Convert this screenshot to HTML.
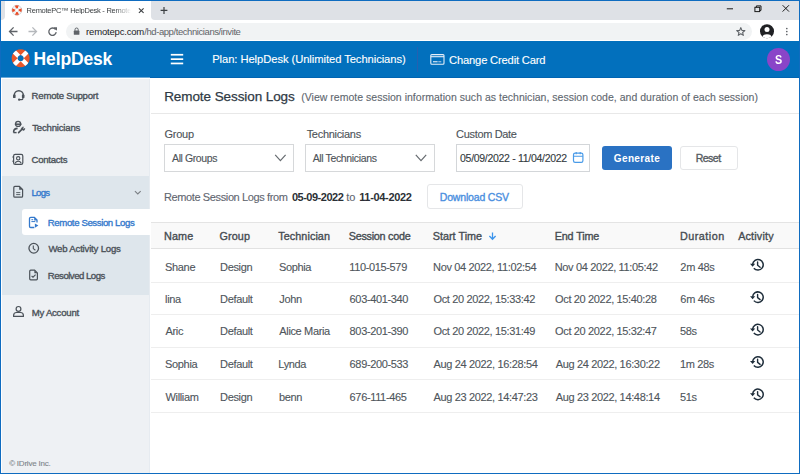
<!DOCTYPE html>
<html><head><meta charset="utf-8">
<style>
*{box-sizing:border-box;margin:0;padding:0}
html,body{width:800px;height:474px;overflow:hidden;background:#fff}
body{position:relative;font-family:"Liberation Sans",sans-serif}
.a{position:absolute}
.t{position:absolute;white-space:nowrap;line-height:1}
svg{position:absolute;overflow:visible}
</style></head><body>
<!-- browser chrome -->
<div class="a" style="left:0;top:0;width:800px;height:41px;background:#fff"></div>
<div class="a" style="left:0;top:0;width:5px;height:20px;background:#dee1e6;border-bottom-right-radius:4px"></div>
<div class="a" style="left:151px;top:0;width:649px;height:20px;background:#dee1e6;border-bottom-left-radius:4px"></div>
<div class="a" style="left:4px;top:0;width:148px;height:1px;background:#dee1e6"></div>
<div class="a" style="left:65.5px;top:22.5px;width:686px;height:17px;background:#f1f3f4;border-radius:9px"></div>

<!-- app header -->
<div class="a" style="left:0;top:41px;width:800px;height:37px;background:#0270bd"></div>
<div class="a" style="left:150px;top:77px;width:650px;height:1px;background:#0064b2"></div>
<div class="a" style="left:417px;top:47px;width:1px;height:25px;background:#2560b0"></div>
<div class="a" style="left:767px;top:48px;width:23px;height:23px;border-radius:50%;background:#8a45c8"></div>

<!-- sidebar -->
<div class="a" style="left:0;top:77px;width:150px;height:1px;background:#6aa9d9"></div><div class="a" style="left:0;top:78px;width:150px;height:1px;background:#fff"></div><div class="a" style="left:1px;top:78px;width:1px;height:396px;background:#fff"></div>
<div class="a" style="left:2px;top:79px;width:148px;height:395px;background:#eef1f4;border-right:1px solid #e6ebf0"></div>
<div class="a" style="left:2px;top:176px;width:147px;height:119px;background:#dee6ec"></div>
<div class="a" style="left:22px;top:209px;width:128px;height:26px;background:#fff;border-radius:3px 0 0 3px"></div>

<!-- content -->
<div class="a" style="left:151px;top:113px;width:649px;height:1px;background:#e8e8e8"></div>
<div class="a" style="left:164px;top:144px;width:130px;height:28px;border:1px solid #d6d8da"></div>
<div class="a" style="left:305px;top:144px;width:130px;height:28px;border:1px solid #d6d8da"></div>
<div class="a" style="left:456px;top:144px;width:134px;height:28px;border:1px solid #d3d6d9"></div>
<div class="a" style="left:602px;top:146px;width:70px;height:24px;background:#2a72c3;border-radius:3px"></div>
<div class="a" style="left:680px;top:146px;width:58px;height:24px;border:1px solid #e5e6e8;border-radius:3px"></div>
<div class="a" style="left:427px;top:184px;width:96px;height:25px;border:1px solid #e5e6e8;border-radius:3px"></div>

<!-- table -->
<div class="a" style="left:151px;top:222px;width:649px;height:27px;background:#f9f9f9;border-top:1px solid #e4e4e4;border-bottom:1px solid #e2e2e2"></div>
<div class="a" style="left:151px;top:282px;width:649px;height:1px;background:#eeeeee"></div>
<div class="a" style="left:151px;top:314px;width:649px;height:1px;background:#eeeeee"></div>
<div class="a" style="left:151px;top:347px;width:649px;height:1px;background:#eeeeee"></div>
<div class="a" style="left:151px;top:379px;width:649px;height:1px;background:#eeeeee"></div>
<div class="a" style="left:151px;top:412px;width:649px;height:1px;background:#eeeeee"></div>

<span id="tab" class="t" style="left:26.60px;top:6.69px;font-size:7.5px;font-weight:400;color:#3c4043;letter-spacing:-0.269px;-webkit-mask-image:linear-gradient(90deg,#000 0,#000 88px,transparent 104px);">RemotePC™ HelpDesk - Remote</span>
<span id="url1" class="t" style="left:86.10px;top:27.36px;font-size:9.5px;font-weight:400;color:#202124;letter-spacing:-0.182px;">remotepc.com</span>
<span id="url2" class="t" style="left:144.20px;top:27.36px;font-size:9.5px;font-weight:400;color:#5f6368;letter-spacing:-0.420px;">/hd-app/technicians/invite</span>
<span id="logo" class="t" style="left:33.60px;top:50.71px;font-size:17.5px;font-weight:700;color:#ffffff;letter-spacing:-0.143px;">HelpDesk</span>
<span id="plan" class="t" style="left:212.16px;top:54.44px;font-size:11.2px;font-weight:400;color:#ffffff;letter-spacing:-0.057px;-webkit-text-stroke:0.12px currentColor;">Plan: HelpDesk (Unlimited Technicians)</span>
<span id="ccc" class="t" style="left:449.08px;top:54.92px;font-size:11.2px;font-weight:400;color:#ffffff;letter-spacing:-0.179px;-webkit-text-stroke:0.12px currentColor;">Change Credit Card</span>
<span id="avS" class="t" style="left:774.54px;top:54.14px;font-size:12px;font-weight:700;color:#ffffff;letter-spacing:-0.350px;transform:scaleX(0.9);transform-origin:0 0;">S</span>
<span id="sb1" class="t" style="left:31.60px;top:90.59px;font-size:9.6px;font-weight:400;color:#4b5259;letter-spacing:-0.230px;-webkit-text-stroke:0.35px currentColor;">Remote Support</span>
<span id="sb2" class="t" style="left:32.20px;top:123.11px;font-size:9.6px;font-weight:400;color:#4b5259;letter-spacing:-0.200px;-webkit-text-stroke:0.35px currentColor;">Technicians</span>
<span id="sb3" class="t" style="left:31.60px;top:155.15px;font-size:9.6px;font-weight:400;color:#4b5259;letter-spacing:-0.286px;-webkit-text-stroke:0.35px currentColor;">Contacts</span>
<span id="sb4" class="t" style="left:31.52px;top:188.27px;font-size:9.6px;font-weight:400;color:#3479cc;letter-spacing:-0.736px;-webkit-text-stroke:0.35px currentColor;">Logs</span>
<span id="sb5" class="t" style="left:47.84px;top:217.79px;font-size:9.6px;font-weight:400;color:#3479cc;letter-spacing:-0.387px;-webkit-text-stroke:0.35px currentColor;">Remote Session Logs</span>
<span id="sb6" class="t" style="left:48.44px;top:244.15px;font-size:9.6px;font-weight:400;color:#4b5259;letter-spacing:-0.196px;-webkit-text-stroke:0.35px currentColor;">Web Activity Logs</span>
<span id="sb7" class="t" style="left:47.84px;top:271.27px;font-size:9.6px;font-weight:400;color:#4b5259;letter-spacing:-0.500px;-webkit-text-stroke:0.35px currentColor;">Resolved Logs</span>
<span id="sb8" class="t" style="left:31.70px;top:308.07px;font-size:9.6px;font-weight:400;color:#4b5259;letter-spacing:-0.237px;-webkit-text-stroke:0.35px currentColor;">My Account</span>
<span id="copy" class="t" style="left:9.20px;top:459.63px;font-size:8px;font-weight:400;color:#80868b;letter-spacing:-0.223px;-webkit-text-stroke:0.12px currentColor;">© IDrive Inc.</span>
<span id="title" class="t" style="left:164.20px;top:89.97px;font-size:13.5px;font-weight:400;color:#2f3a45;letter-spacing:-0.083px;-webkit-text-stroke:0.25px currentColor;">Remote Session Logs</span>
<span id="sub" class="t" style="left:301.20px;top:91.91px;font-size:10.5px;font-weight:400;color:#5f6870;letter-spacing:0.018px;-webkit-text-stroke:0.12px currentColor;">(View remote session information such as technician, session code, and duration of each session)</span>
<span id="lg" class="t" style="left:164.50px;top:128.77px;font-size:11px;font-weight:400;color:#4d5359;letter-spacing:-0.250px;-webkit-text-stroke:0.12px currentColor;">Group</span>
<span id="lt" class="t" style="left:306.68px;top:128.77px;font-size:11px;font-weight:400;color:#4d5359;letter-spacing:-0.300px;-webkit-text-stroke:0.12px currentColor;">Technicians</span>
<span id="ld" class="t" style="left:456.08px;top:129.45px;font-size:11px;font-weight:400;color:#4d5359;letter-spacing:-0.330px;-webkit-text-stroke:0.12px currentColor;">Custom Date</span>
<span id="sg" class="t" style="left:172.12px;top:153.23px;font-size:10.5px;font-weight:400;color:#4d5359;letter-spacing:-0.415px;-webkit-text-stroke:0.12px currentColor;">All Groups</span>
<span id="st" class="t" style="left:312.64px;top:153.23px;font-size:10.5px;font-weight:400;color:#4d5359;letter-spacing:-0.357px;-webkit-text-stroke:0.12px currentColor;">All Technicians</span>
<span id="sd" class="t" style="left:460.08px;top:152.91px;font-size:10.5px;font-weight:400;color:#333a40;letter-spacing:-0.302px;-webkit-text-stroke:0.12px currentColor;">05/09/2022 - 11/04/2022</span>
<span id="gen" class="t" style="left:613.84px;top:154.25px;font-size:10px;font-weight:700;color:#ffffff;letter-spacing:0.360px;">Generate</span>
<span id="rst" class="t" style="left:695.70px;top:153.23px;font-size:10.5px;font-weight:400;color:#555b61;letter-spacing:-0.500px;-webkit-text-stroke:0.35px currentColor;">Reset</span>
<span id="sum1" class="t" style="left:163.96px;top:191.69px;font-size:11px;font-weight:400;color:#5f6670;letter-spacing:-0.379px;-webkit-text-stroke:0.12px currentColor;">Remote Session Logs from</span>
<span id="sum2" class="t" style="left:291.88px;top:191.69px;font-size:11px;font-weight:700;color:#2b3035;letter-spacing:-0.481px;">05-09-2022</span>
<span id="sum3" class="t" style="left:346.32px;top:191.69px;font-size:11px;font-weight:400;color:#5f6670;letter-spacing:0.000px;-webkit-text-stroke:0.12px currentColor;">to</span>
<span id="sum4" class="t" style="left:359.20px;top:191.69px;font-size:11px;font-weight:700;color:#2b3035;letter-spacing:-0.330px;">11-04-2022</span>
<span id="csv" class="t" style="left:439.80px;top:191.71px;font-size:10.5px;font-weight:400;color:#4a8fe0;letter-spacing:-0.173px;-webkit-text-stroke:0.35px currentColor;">Download CSV</span>
<span id="h1" class="t" style="left:164.00px;top:231.26px;font-size:10.8px;font-weight:400;color:#464c52;letter-spacing:0.137px;-webkit-text-stroke:0.35px currentColor;">Name</span>
<span id="h2" class="t" style="left:219.40px;top:231.26px;font-size:10.8px;font-weight:400;color:#464c52;letter-spacing:0.147px;-webkit-text-stroke:0.35px currentColor;">Group</span>
<span id="h3" class="t" style="left:278.30px;top:231.26px;font-size:10.8px;font-weight:400;color:#464c52;letter-spacing:0.068px;-webkit-text-stroke:0.35px currentColor;">Technician</span>
<span id="h4" class="t" style="left:348.70px;top:231.26px;font-size:10.8px;font-weight:400;color:#464c52;letter-spacing:-0.253px;-webkit-text-stroke:0.35px currentColor;">Session code</span>
<span id="h5" class="t" style="left:432.70px;top:231.26px;font-size:10.8px;font-weight:400;color:#464c52;letter-spacing:0.023px;-webkit-text-stroke:0.35px currentColor;">Start Time</span>
<span id="h6" class="t" style="left:554.68px;top:231.26px;font-size:10.8px;font-weight:400;color:#464c52;letter-spacing:-0.129px;-webkit-text-stroke:0.35px currentColor;">End Time</span>
<span id="h7" class="t" style="left:679.96px;top:231.26px;font-size:10.8px;font-weight:400;color:#464c52;letter-spacing:0.500px;-webkit-text-stroke:0.35px currentColor;">Duration</span>
<span id="h8" class="t" style="left:738.16px;top:231.26px;font-size:10.8px;font-weight:400;color:#464c52;letter-spacing:0.170px;-webkit-text-stroke:0.35px currentColor;">Activity</span>
<span id="r0c0" class="t" style="left:165.10px;top:261.69px;font-size:11px;font-weight:400;color:#4f565c;letter-spacing:-0.350px;-webkit-text-stroke:0.12px currentColor;">Shane</span>
<span id="r0c1" class="t" style="left:220.10px;top:261.69px;font-size:11px;font-weight:400;color:#4f565c;letter-spacing:-0.350px;-webkit-text-stroke:0.12px currentColor;">Design</span>
<span id="r0c2" class="t" style="left:278.90px;top:261.69px;font-size:11px;font-weight:400;color:#4f565c;letter-spacing:-0.350px;-webkit-text-stroke:0.12px currentColor;">Sophia</span>
<span id="r0c3" class="t" style="left:349.20px;top:261.69px;font-size:11px;font-weight:400;color:#4f565c;letter-spacing:-0.350px;-webkit-text-stroke:0.12px currentColor;">110-015-579</span>
<span id="r0c4" class="t" style="left:433.10px;top:261.69px;font-size:11px;font-weight:400;color:#4f565c;letter-spacing:-0.350px;-webkit-text-stroke:0.12px currentColor;">Nov 04 2022, 11:02:54</span>
<span id="r0c5" class="t" style="left:554.68px;top:261.69px;font-size:11px;font-weight:400;color:#4f565c;letter-spacing:-0.350px;-webkit-text-stroke:0.12px currentColor;">Nov 04 2022, 11:05:42</span>
<span id="r0c6" class="t" style="left:680.36px;top:261.69px;font-size:11px;font-weight:400;color:#4f565c;letter-spacing:-0.350px;-webkit-text-stroke:0.12px currentColor;">2m 48s</span>
<span id="r1c0" class="t" style="left:165.10px;top:294.41px;font-size:11px;font-weight:400;color:#4f565c;letter-spacing:-0.350px;-webkit-text-stroke:0.12px currentColor;">lina</span>
<span id="r1c1" class="t" style="left:220.10px;top:294.41px;font-size:11px;font-weight:400;color:#4f565c;letter-spacing:-0.350px;-webkit-text-stroke:0.12px currentColor;">Default</span>
<span id="r1c2" class="t" style="left:279.30px;top:294.41px;font-size:11px;font-weight:400;color:#4f565c;letter-spacing:-0.350px;-webkit-text-stroke:0.12px currentColor;">John</span>
<span id="r1c3" class="t" style="left:349.60px;top:294.41px;font-size:11px;font-weight:400;color:#4f565c;letter-spacing:-0.350px;-webkit-text-stroke:0.12px currentColor;">603-401-340</span>
<span id="r1c4" class="t" style="left:433.50px;top:294.41px;font-size:11px;font-weight:400;color:#4f565c;letter-spacing:-0.350px;-webkit-text-stroke:0.12px currentColor;">Oct 20 2022, 15:33:42</span>
<span id="r1c5" class="t" style="left:555.08px;top:294.41px;font-size:11px;font-weight:400;color:#4f565c;letter-spacing:-0.350px;-webkit-text-stroke:0.12px currentColor;">Oct 20 2022, 15:40:28</span>
<span id="r1c6" class="t" style="left:680.36px;top:294.41px;font-size:11px;font-weight:400;color:#4f565c;letter-spacing:-0.350px;-webkit-text-stroke:0.12px currentColor;">6m 46s</span>
<span id="r2c0" class="t" style="left:165.50px;top:326.45px;font-size:11px;font-weight:400;color:#4f565c;letter-spacing:-0.350px;-webkit-text-stroke:0.12px currentColor;">Aric</span>
<span id="r2c1" class="t" style="left:220.10px;top:326.45px;font-size:11px;font-weight:400;color:#4f565c;letter-spacing:-0.350px;-webkit-text-stroke:0.12px currentColor;">Default</span>
<span id="r2c2" class="t" style="left:279.30px;top:326.45px;font-size:11px;font-weight:400;color:#4f565c;letter-spacing:-0.350px;-webkit-text-stroke:0.12px currentColor;">Alice Maria</span>
<span id="r2c3" class="t" style="left:349.60px;top:326.45px;font-size:11px;font-weight:400;color:#4f565c;letter-spacing:-0.350px;-webkit-text-stroke:0.12px currentColor;">803-201-390</span>
<span id="r2c4" class="t" style="left:433.50px;top:326.45px;font-size:11px;font-weight:400;color:#4f565c;letter-spacing:-0.350px;-webkit-text-stroke:0.12px currentColor;">Oct 20 2022, 15:31:49</span>
<span id="r2c5" class="t" style="left:555.08px;top:326.45px;font-size:11px;font-weight:400;color:#4f565c;letter-spacing:-0.350px;-webkit-text-stroke:0.12px currentColor;">Oct 20 2022, 15:32:47</span>
<span id="r2c6" class="t" style="left:679.96px;top:326.45px;font-size:11px;font-weight:400;color:#4f565c;letter-spacing:-0.350px;-webkit-text-stroke:0.12px currentColor;">58s</span>
<span id="r3c0" class="t" style="left:165.10px;top:359.09px;font-size:11px;font-weight:400;color:#4f565c;letter-spacing:-0.350px;-webkit-text-stroke:0.12px currentColor;">Sophia</span>
<span id="r3c1" class="t" style="left:220.10px;top:359.09px;font-size:11px;font-weight:400;color:#4f565c;letter-spacing:-0.350px;-webkit-text-stroke:0.12px currentColor;">Default</span>
<span id="r3c2" class="t" style="left:278.30px;top:359.09px;font-size:11px;font-weight:400;color:#4f565c;letter-spacing:-0.350px;-webkit-text-stroke:0.12px currentColor;">Lynda</span>
<span id="r3c3" class="t" style="left:349.60px;top:359.09px;font-size:11px;font-weight:400;color:#4f565c;letter-spacing:-0.350px;-webkit-text-stroke:0.12px currentColor;">689-200-533</span>
<span id="r3c4" class="t" style="left:433.50px;top:359.09px;font-size:11px;font-weight:400;color:#4f565c;letter-spacing:-0.350px;-webkit-text-stroke:0.12px currentColor;">Aug 24 2022, 16:28:54</span>
<span id="r3c5" class="t" style="left:555.68px;top:359.09px;font-size:11px;font-weight:400;color:#4f565c;letter-spacing:-0.350px;-webkit-text-stroke:0.12px currentColor;">Aug 24 2022, 16:30:22</span>
<span id="r3c6" class="t" style="left:679.96px;top:359.09px;font-size:11px;font-weight:400;color:#4f565c;letter-spacing:-0.350px;-webkit-text-stroke:0.12px currentColor;">1m 28s</span>
<span id="r4c0" class="t" style="left:165.50px;top:391.73px;font-size:11px;font-weight:400;color:#4f565c;letter-spacing:-0.350px;-webkit-text-stroke:0.12px currentColor;">William</span>
<span id="r4c1" class="t" style="left:220.10px;top:391.73px;font-size:11px;font-weight:400;color:#4f565c;letter-spacing:-0.350px;-webkit-text-stroke:0.12px currentColor;">Design</span>
<span id="r4c2" class="t" style="left:278.90px;top:391.73px;font-size:11px;font-weight:400;color:#4f565c;letter-spacing:-0.350px;-webkit-text-stroke:0.12px currentColor;">benn</span>
<span id="r4c3" class="t" style="left:349.60px;top:391.73px;font-size:11px;font-weight:400;color:#4f565c;letter-spacing:-0.350px;-webkit-text-stroke:0.12px currentColor;">676-111-465</span>
<span id="r4c4" class="t" style="left:433.50px;top:391.73px;font-size:11px;font-weight:400;color:#4f565c;letter-spacing:-0.350px;-webkit-text-stroke:0.12px currentColor;">Aug 23 2022, 14:47:23</span>
<span id="r4c5" class="t" style="left:555.68px;top:391.73px;font-size:11px;font-weight:400;color:#4f565c;letter-spacing:-0.350px;-webkit-text-stroke:0.12px currentColor;">Aug 23 2022, 14:48:14</span>
<span id="r4c6" class="t" style="left:679.96px;top:391.73px;font-size:11px;font-weight:400;color:#4f565c;letter-spacing:-0.350px;-webkit-text-stroke:0.12px currentColor;">51s</span>
<svg width="800" height="474" viewBox="0 0 800 474" style="left:0;top:0;position:absolute"><path d="M21.52 8.04A5.1 5.1 0 0 1 21.52 12.36L18.62 11.00A1.9 1.9 0 0 0 18.62 9.40Z" fill="#ef4a23"/><path d="M21.52 12.36A5.1 5.1 0 0 1 19.06 14.82L17.70 11.92A1.9 1.9 0 0 0 18.62 11.00Z" fill="#f4f4f4"/><path d="M19.06 14.82A5.1 5.1 0 0 1 14.74 14.82L16.10 11.92A1.9 1.9 0 0 0 17.70 11.92Z" fill="#ef4a23"/><path d="M14.74 14.82A5.1 5.1 0 0 1 12.28 12.36L15.18 11.00A1.9 1.9 0 0 0 16.10 11.92Z" fill="#f4f4f4"/><path d="M12.28 12.36A5.1 5.1 0 0 1 12.28 8.04L15.18 9.40A1.9 1.9 0 0 0 15.18 11.00Z" fill="#ef4a23"/><path d="M12.28 8.04A5.1 5.1 0 0 1 14.74 5.58L16.10 8.48A1.9 1.9 0 0 0 15.18 9.40Z" fill="#f4f4f4"/><path d="M14.74 5.58A5.1 5.1 0 0 1 19.06 5.58L17.70 8.48A1.9 1.9 0 0 0 16.10 8.48Z" fill="#ef4a23"/><path d="M19.06 5.58A5.1 5.1 0 0 1 21.52 8.04L18.62 9.40A1.9 1.9 0 0 0 17.70 8.48Z" fill="#f4f4f4"/><circle cx="16.9" cy="10.2" r="4.8999999999999995" fill="none" stroke="#b8bcc0" stroke-width="0.5"/><circle cx="16.9" cy="10.2" r="1.9" fill="none" stroke="#b8bcc0" stroke-width="0.4"/><path d="M138.9 8.3L143.6 12.9M143.6 8.3L138.9 12.9" stroke="#3c4043" stroke-width="1.1"/><path d="M164 7V13.9M160.6 10.4H167.4" stroke="#3c4043" stroke-width="1.2"/><path d="M17.5 31.5H9.8M13.6 27.4L9.5 31.5L13.6 35.6" fill="none" stroke="#5f6368" stroke-width="1.3"/><path d="M28.5 31.5H36.2M32.4 27.4L36.5 31.5L32.4 35.6" fill="none" stroke="#b5b8bc" stroke-width="1.3"/><path d="M55.6 29.6A3.7 3.7 0 1 0 56.2 32.2" fill="none" stroke="#5f6368" stroke-width="1.3"/><path d="M53.6 27.3H57V30.8Z" fill="#5f6368"/><rect x="73.8" y="30.6" width="5.6" height="4.2" rx="0.6" fill="#5f6368"/><path d="M75 30.8V29.6A1.6 1.6 0 0 1 78.2 29.6V30.8" fill="none" stroke="#5f6368" stroke-width="1"/><path d="M740.80 27.60L741.92 30.36L744.89 30.57L742.61 32.49L743.33 35.38L740.80 33.80L738.27 35.38L738.99 32.49L736.71 30.57L739.68 30.36Z" fill="none" stroke="#5f6368" stroke-width="1.1" stroke-linejoin="round"/><clipPath id="pc"><circle cx="767" cy="31.2" r="7"/></clipPath><circle cx="767" cy="31.2" r="7" fill="#202124"/><g clip-path="url(#pc)"><circle cx="767" cy="29.6" r="2.5" fill="#fff"/><ellipse cx="767" cy="37.6" rx="4.6" ry="3.4" fill="#fff"/></g><circle cx="786.8" cy="28.5" r="0.85" fill="#5f6368"/><circle cx="786.8" cy="31.5" r="0.85" fill="#5f6368"/><circle cx="786.8" cy="34.5" r="0.85" fill="#5f6368"/><path d="M726.8 8.8H733" stroke="#1a1a1a" stroke-width="1"/><rect x="754.9" y="7.3" width="4.8" height="4.3" fill="none" stroke="#1a1a1a" stroke-width="1"/><path d="M756.4 7.3V5.9H761V10.4H759.7" fill="none" stroke="#1a1a1a" stroke-width="1"/><path d="M782.6 5.2L789 11.6M789 5.2L782.6 11.6" stroke="#1a1a1a" stroke-width="1"/><clipPath id="lb"><path fill-rule="evenodd" d="M20.65 49.2A9 9 0 1 1 20.64 49.2ZM20.65 55.1A3.1 3.1 0 1 0 20.66 55.1Z"/></clipPath><g clip-path="url(#lb)"><rect x="11" y="48" width="20" height="21" fill="#e9572b"/><path d="M20.65 58.2L9.6 47.15M20.65 58.2L31.7 47.15M20.65 58.2L9.6 69.25M20.65 58.2L31.7 69.25" stroke="#fff" stroke-width="4.4"/></g><rect x="170.8" y="53.9" width="12.4" height="1.7" fill="#fff"/><rect x="170.8" y="58.3" width="12.4" height="1.7" fill="#fff"/><rect x="170.8" y="62.6" width="12.4" height="1.7" fill="#fff"/><rect x="430.8" y="54.6" width="13.2" height="9.6" rx="1" fill="none" stroke="#e6eef8" stroke-width="1.1"/><path d="M430.8 56.7H444" stroke="#e6eef8" stroke-width="1.1"/><rect x="433" y="61.2" width="4.6" height="1.1" fill="#e6eef8"/><rect x="438.3" y="61.2" width="3" height="1.1" fill="#a9c7ea"/><path d="M14.3 96V95.2A4.5 4.5 0 0 1 23.3 95.2V96" fill="none" stroke="#4b5259" stroke-width="1.5"/><rect x="13" y="94.6" width="2.6" height="3.5" rx="0.9" fill="#4b5259"/><rect x="21.9" y="94.6" width="2.6" height="3.5" rx="0.9" fill="#4b5259"/><path d="M22.9 97.6V98.4Q22.9 99.7 21.4 99.7H19.6" fill="none" stroke="#4b5259" stroke-width="1.2"/><circle cx="19.1" cy="99.7" r="1.1" fill="#4b5259"/><circle cx="18.1" cy="123.9" r="2.5" fill="none" stroke="#4b5259" stroke-width="1.3"/><path d="M14.8 124.2H21.5" stroke="#4b5259" stroke-width="1.5"/><path d="M13.7 132.6V131.4Q13.9 128.7 17.6 128.4" fill="none" stroke="#4b5259" stroke-width="1.6"/><path d="M13.4 132.6H16.6" stroke="#4b5259" stroke-width="1.4"/><path d="M18.6 132.6L22.6 128.6" fill="none" stroke="#4b5259" stroke-width="1.6" stroke-linecap="round"/><path d="M21.2 128.8Q21.6 126.9 23.6 126.9L22.6 128.3L23.6 129.3L24.8 128.3Q25.1 130.6 22.9 130.6" fill="#4b5259" stroke="#4b5259" stroke-width="0.6"/><rect x="13.6" y="154.3" width="9.2" height="10" rx="1.6" fill="none" stroke="#4b5259" stroke-width="1.2"/><circle cx="18.2" cy="158.3" r="1.7" fill="none" stroke="#4b5259" stroke-width="1.1"/><path d="M15.3 163.4Q15.6 161.2 18.2 161.2Q20.8 161.2 21.1 163.4" fill="none" stroke="#4b5259" stroke-width="1.1"/><path d="M12.2 157H13.6M12.2 161.2H13.6" stroke="#4b5259" stroke-width="0.9"/><path d="M14.9 186.4H19.4L22.6 189.6V196.2Q22.6 197.2 21.6 197.2H14.9Q13.8 197.2 13.8 196.2V187.4Q13.8 186.4 14.9 186.4Z" fill="none" stroke="#4b5259" stroke-width="1.2"/><path d="M19.2 186.6L22.4 189.8H19.2Z" fill="#4b5259"/><path d="M16.2 192.6H20.3M16.2 194.6H20.3" stroke="#4b5259" stroke-width="0.9"/><path d="M37 222.6V220L34.4 217.4H30.7Q29.5 217.4 29.5 218.6V226.3Q29.5 227.5 30.7 227.5H34.3" fill="none" stroke="#3479cc" stroke-width="1.3"/><path d="M34.2 217.5L37.1 220.4H34.2Z" fill="#3479cc"/><path d="M31.4 219.7H33.2M31.4 221.6H35.3" stroke="#3479cc" stroke-width="1"/><path d="M34.9 223.5L38.4 225.6L34.9 227.7Z" fill="#3479cc"/><circle cx="33.75" cy="248.25" r="4.8" fill="none" stroke="#4b5259" stroke-width="1.3"/><path d="M33.3 245.6V248.6L35.4 250.2" fill="none" stroke="#4b5259" stroke-width="1.1"/><path d="M30.7 270.2H34.6L37.4 273V278.8Q37.4 279.8 36.4 279.8H30.7Q29.7 279.8 29.7 278.8V271.2Q29.7 270.2 30.7 270.2Z" fill="none" stroke="#4b5259" stroke-width="1.2"/><path d="M34.4 270.4L37.2 273.2H34.4Z" fill="#4b5259"/><path d="M31.6 276L33 277.2L35.6 274.6" fill="none" stroke="#4b5259" stroke-width="1.1"/><circle cx="18.5" cy="308.9" r="2.4" fill="none" stroke="#4b5259" stroke-width="1.2"/><path d="M13.6 316.4V315.4Q13.6 312.5 16.5 312.5H20.5Q23.4 312.5 23.4 315.4V316.4Z" fill="none" stroke="#4b5259" stroke-width="1.2" stroke-linejoin="round"/><path d="M134.9 191.1L137.8 194L140.7 191.1" fill="none" stroke="#7b8085" stroke-width="1.1"/><path d="M275.2 154.9L280.4 160.6L285.6 154.9" fill="none" stroke="#666b70" stroke-width="1.2"/><path d="M415.8 154.9L421 160.6L426.2 154.9" fill="none" stroke="#666b70" stroke-width="1.2"/><rect x="573.5" y="153.2" width="9.4" height="9.2" rx="1.6" fill="none" stroke="#4a9be8" stroke-width="1.2"/><path d="M573.5 156.3H582.9M576.2 152V154.2M580.2 152V154.2" stroke="#4a9be8" stroke-width="1.1"/><path d="M492.5 232.4V239M489.4 236L492.5 239.3L495.6 236" fill="none" stroke="#3d95ec" stroke-width="1.3"/><path d="M752.62 264.34A5.3 5.3 0 1 1 753.84 268.21" fill="none" stroke="#1e2d3a" stroke-width="1.5"/><path d="M750.02 263.74L752.62 266.74L755.22 263.74Z" fill="#1e2d3a"/><path d="M757.60 262.00V265.20L760.10 267.20" fill="none" stroke="#1e2d3a" stroke-width="1.4" stroke-linecap="round"/><path d="M752.62 296.74A5.3 5.3 0 1 1 753.84 300.61" fill="none" stroke="#1e2d3a" stroke-width="1.5"/><path d="M750.02 296.14L752.62 299.14L755.22 296.14Z" fill="#1e2d3a"/><path d="M757.60 294.40V297.60L760.10 299.60" fill="none" stroke="#1e2d3a" stroke-width="1.4" stroke-linecap="round"/><path d="M752.62 329.14A5.3 5.3 0 1 1 753.84 333.01" fill="none" stroke="#1e2d3a" stroke-width="1.5"/><path d="M750.02 328.54L752.62 331.54L755.22 328.54Z" fill="#1e2d3a"/><path d="M757.60 326.80V330.00L760.10 332.00" fill="none" stroke="#1e2d3a" stroke-width="1.4" stroke-linecap="round"/><path d="M752.62 361.54A5.3 5.3 0 1 1 753.84 365.41" fill="none" stroke="#1e2d3a" stroke-width="1.5"/><path d="M750.02 360.94L752.62 363.94L755.22 360.94Z" fill="#1e2d3a"/><path d="M757.60 359.20V362.40L760.10 364.40" fill="none" stroke="#1e2d3a" stroke-width="1.4" stroke-linecap="round"/><path d="M752.62 393.94A5.3 5.3 0 1 1 753.84 397.81" fill="none" stroke="#1e2d3a" stroke-width="1.5"/><path d="M750.02 393.34L752.62 396.34L755.22 393.34Z" fill="#1e2d3a"/><path d="M757.60 391.60V394.80L760.10 396.80" fill="none" stroke="#1e2d3a" stroke-width="1.4" stroke-linecap="round"/></svg>

<!-- window border -->
<div class="a" style="left:0;top:0;width:800px;height:474px;border:1px solid #0f6cc0"></div>
</body></html>
